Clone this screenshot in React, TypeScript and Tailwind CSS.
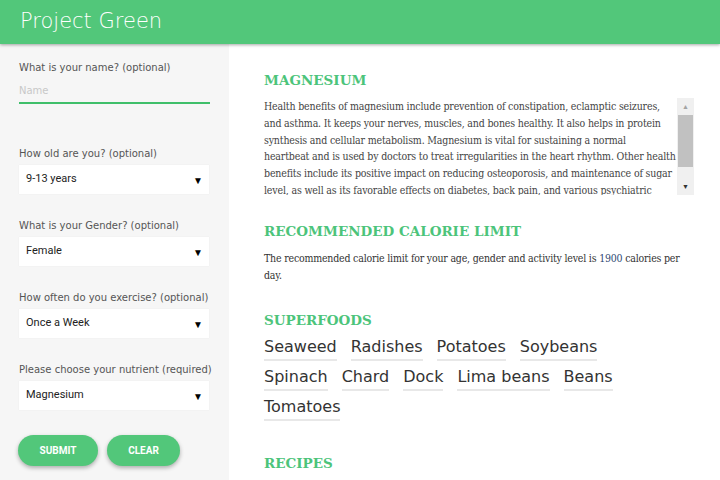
import React from "react";

const fields = [
  { label: "How old are you? (optional)", value: "9-13 years" },
  { label: "What is your Gender? (optional)", value: "Female" },
  { label: "How often do you exercise? (optional)", value: "Once a Week" },
  { label: "Please choose your nutrient (required)", value: "Magnesium" },
];

const foods = [
  "Seaweed",
  "Radishes",
  "Potatoes",
  "Soybeans",
  "Spinach",
  "Chard",
  "Dock",
  "Lima beans",
  "Beans",
  "Tomatoes",
];

// lines as they wrap in the scroll box
const magnesium = [
  "Health benefits of magnesium include prevention of constipation, eclamptic seizures,",
  "and asthma. It keeps your nerves, muscles, and bones healthy. It also helps in protein",
  "synthesis and cellular metabolism. Magnesium is vital for sustaining a normal",
  "heartbeat and is used by doctors to treat irregularities in the heart rhythm. Other health",
  "benefits include its positive impact on reducing osteoporosis, and maintenance of sugar",
  "level, as well as its favorable effects on diabetes, back pain, and various psychiatric",
  "disorders.",
];

const sans = "font-['DejaVu_Sans',sans-serif]";
const slab = "font-['DejaVu_Serif_Condensed','DejaVu_Serif',serif]";
const heading = "font-['DejaVu_Serif',serif] text-[13.5px] font-bold text-[#4cc47a] leading-[22px]";

const SelectBox = ({ value }: { value: string }) => (
  <div className="h-[29px] w-[190px] bg-white flex items-center justify-between pl-[7px] pr-[6px] shadow-[0_0_1px_rgba(0,0,0,0.08)]">
    <span className="font-['Roboto',sans-serif] text-[11px] text-[#222]">{value}</span>
    <span className="text-[10px] text-black leading-none">▼</span>
  </div>
);

const App = () => {
  return (
    <div className="w-[720px] h-[480px] overflow-hidden flex flex-col bg-white">
      <header className="h-[44px] shrink-0 bg-[#52c77a] flex items-center pl-[20px] shadow-[0_1px_3px_rgba(0,0,0,0.35)] relative z-10">
        <h1 className={`${sans} text-[21px] text-white font-light`}>Project Green</h1>
      </header>
      <div className="flex flex-1 min-h-0">
        <aside className="w-[229px] shrink-0 bg-[#f6f6f6] pl-[19px] pt-[17px]">
          <label className={`${sans} block text-[10px] text-[#555] leading-[14px]`}>
            What is your name? (optional)
          </label>
          <div className="mt-[3px] w-[191px] border-b-2 border-[#3fbf6a] h-[26px] flex items-center">
            <span className={`${sans} text-[10px] text-[#c8c8c8]`}>Name</span>
          </div>
          <div className="mt-[43px] flex flex-col gap-[25px]">
            {fields.map((f) => (
              <div key={f.label}>
                <label className={`${sans} block text-[10px] text-[#555] leading-[14px] mb-[4px] whitespace-nowrap`}>
                  {f.label}
                </label>
                <SelectBox value={f.value} />
              </div>
            ))}
          </div>
          <div className="flex gap-[9px] mt-[25px] -ml-px">
            <button className="h-[31px] w-[80px] rounded-full bg-[#52c77a] text-white text-[10px] font-bold font-['Roboto',sans-serif] shadow-[0_2px_4px_rgba(0,0,0,0.3)]">
              SUBMIT
            </button>
            <button className="h-[31px] w-[73px] rounded-full bg-[#52c77a] text-white text-[10px] font-bold font-['Roboto',sans-serif] shadow-[0_2px_4px_rgba(0,0,0,0.3)]">
              CLEAR
            </button>
          </div>
        </aside>
        <main className="flex-1 min-w-0 pl-[35px] pr-[26px] pt-[25px]">
          <h2 className={heading}>MAGNESIUM</h2>
          <div className="mt-[7px] flex h-[97px]">
            <div
              className={`${slab} flex-1 min-w-0 text-[10.5px] tracking-[-0.16px] leading-[16.8px] text-[#444] overflow-hidden whitespace-nowrap`}
            >
              {magnesium.map((l) => (
                <p key={l}>{l}</p>
              ))}
            </div>
            <div className="w-[17px] shrink-0 bg-[#f0f0f0] flex flex-col items-center">
              <span className="h-[17px] text-[7px] text-[#a3a3a3] leading-[17px]">▲</span>
              <div className="w-[15px] h-[52px] bg-[#c1c1c1]"></div>
              <div className="flex-1"></div>
              <span className="h-[17px] text-[7px] text-[#333] leading-[17px]">▼</span>
            </div>
          </div>
          <h2 className={`${heading} mt-[25px]`}>RECOMMENDED CALORIE LIMIT</h2>
          <div className={`${slab} mt-[8px] text-[10.5px] tracking-[-0.2px] leading-[16.8px] text-[#333] whitespace-nowrap`}>
            <p>
              The recommended calorie limit for your age, gender and activity level is{" "}
              <span className="text-[#2f4a73]">1900</span> calories per
            </p>
            <p>day.</p>
          </div>
          <h2 className={`${heading} mt-[25px]`}>SUPERFOODS</h2>
          <div className="flex flex-wrap gap-x-[14px] w-[400px]">
            {foods.map((f) => (
              <span
                key={f}
                className={`${sans} text-[16px] text-[#333] leading-[22px] h-[30px] pt-[5px] border-b-2 border-[#e8e8e8]`}
              >
                {f}
              </span>
            ))}
          </div>
          <h2 className={`${heading} mt-[31px]`}>RECIPES</h2>
        </main>
      </div>
    </div>
  );
};

export default App;
